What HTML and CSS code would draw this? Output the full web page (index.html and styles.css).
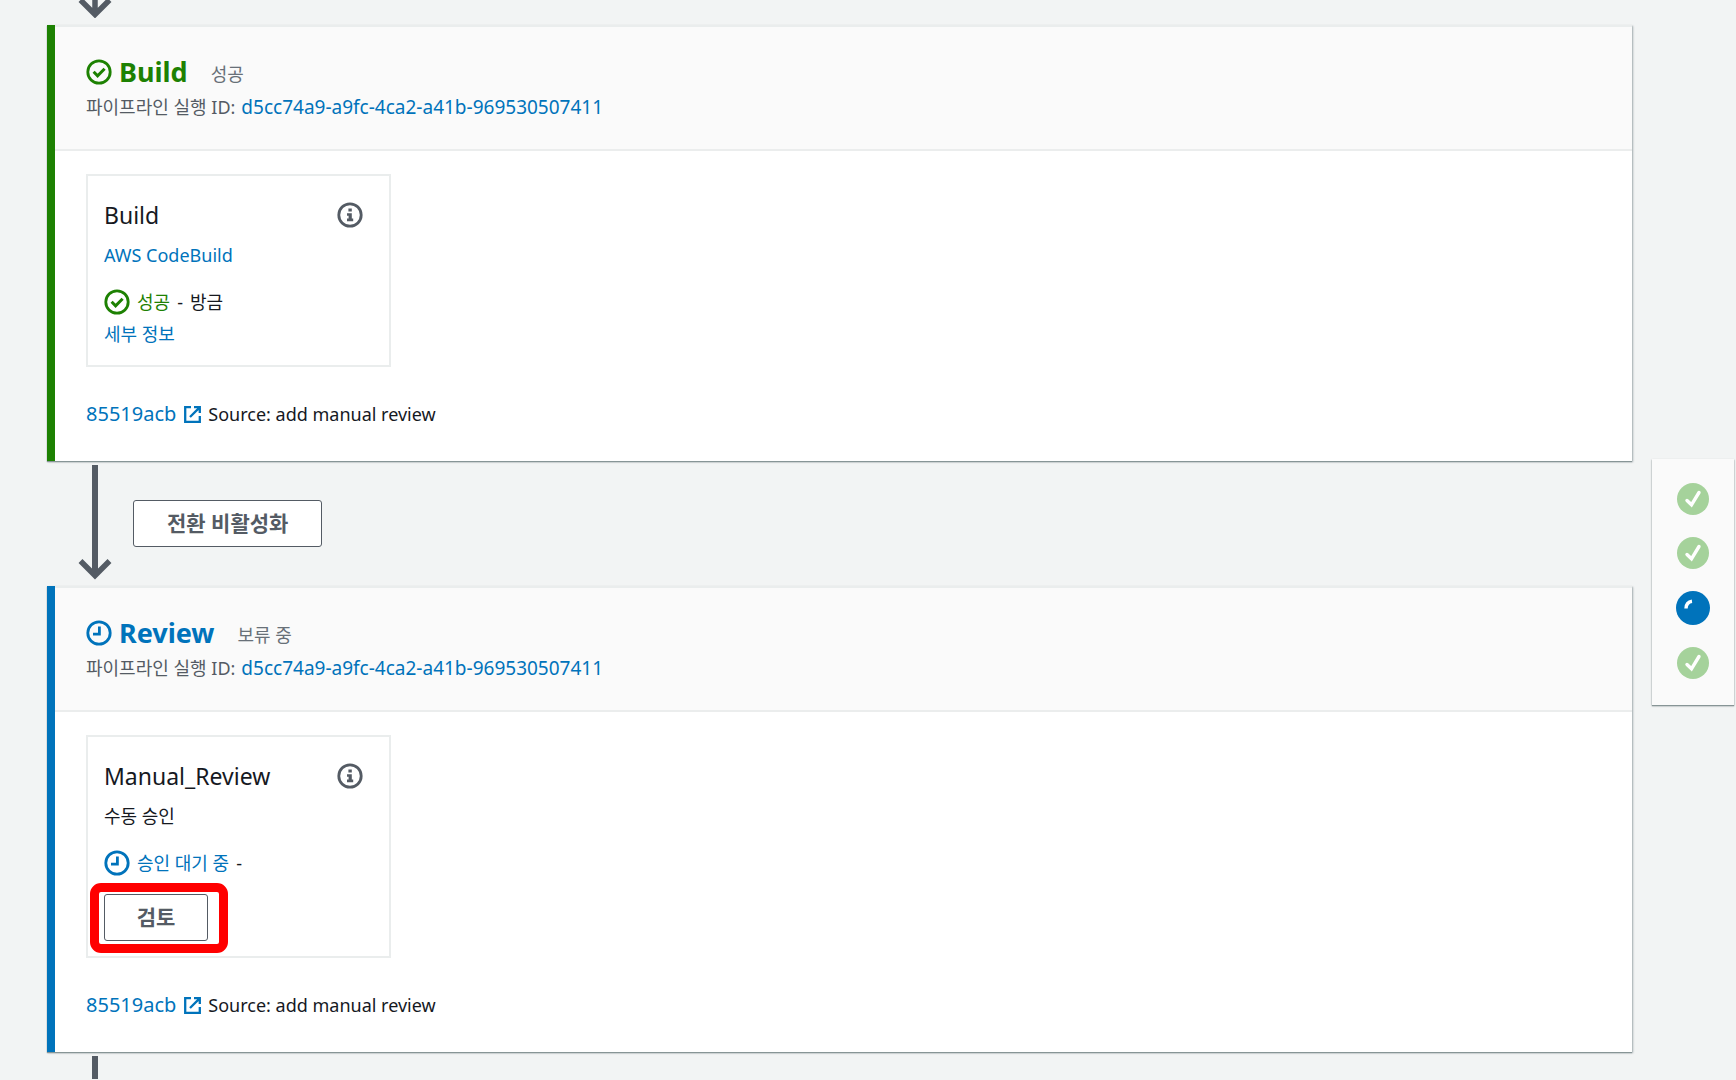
FILE: index.html
```html
<!DOCTYPE html>
<html lang="ko">
<head>
<meta charset="utf-8">
<title>파이프라인</title>
<link rel="stylesheet" href="styles.css">
</head>
<body>
<svg class="defs" aria-hidden="true">
  <symbol id="check" viewBox="0 0 26 26"><circle cx="13" cy="13" r="11.2" fill="none" stroke="currentColor" stroke-width="2.8"/><path d="M7.6 12.8l4 4 7-7" fill="none" stroke="currentColor" stroke-width="3"/></symbol>
  <symbol id="clock" viewBox="0 0 26 26"><circle cx="13" cy="13" r="11.2" fill="none" stroke="currentColor" stroke-width="2.8"/><path d="M13.4 6.5v7.7H7" fill="none" stroke="currentColor" stroke-width="2.8"/></symbol>
  <symbol id="info" viewBox="0 0 26 26"><circle cx="13" cy="13" r="11.2" fill="none" stroke="currentColor" stroke-width="2.8"/><path d="M11.4 6.6h3.4v3h-3.4zM10 11.2h4.8v5.4h1.4v2.6H10v-2.6h1.6v-2.8H10z" fill="currentColor"/></symbol>
  <symbol id="external" viewBox="0 0 17 17"><path d="M7 1.200H1.200v14.600h14.600V10M10 1.200h5.800V7M15.400 1.600L6 11" fill="none" stroke="currentColor" stroke-width="2.300"/></symbol>
  <symbol id="done" viewBox="0 0 32 32"><circle cx="16" cy="16" r="16" fill="#a5d29b"/><path d="M10 17.500l4.500 4.300L22 9.500" fill="none" stroke="#fff" stroke-width="3.400" stroke-linecap="round"/></symbol>
</svg>
<div class="page">
  <main class="pipeline">
    <div class="connector connector-in"><svg class="arrow-end" viewBox="0 0 34 18"><path d="M17 0v14M2.500 0L17 14.500 31.500 0" fill="none" stroke="currentColor" stroke-width="5.500"/></svg></div>

    <section class="stage succeeded">
      <header class="stage-header">
        <h2 class="stage-title"><svg class="icon"><use href="#check"/></svg><span class="stage-name">Build</span><span class="stage-status">성공</span></h2>
        <p class="execution"><span>파이프라인 실행 ID:</span><a class="execution-id" href="#">d5cc74a9-a9fc-4ca2-a41b-969530507411</a></p>
      </header>
      <div class="stage-body">
        <article class="action">
          <div class="action-head"><h3 class="action-name">Build</h3><button class="info" aria-label="정보"><svg class="icon"><use href="#info"/></svg></button></div>
          <p class="provider"><a href="#">AWS CodeBuild</a></p>
          <p class="action-status"><svg class="icon"><use href="#check"/></svg><span class="state">성공</span><span>-</span><span>방금</span></p>
          <p class="details"><a href="#">세부 정보</a></p>
        </article>
        <p class="commit"><a class="commit-id" href="#">85519acb<svg class="external"><use href="#external"/></svg></a><span>Source: add manual review</span></p>
      </div>
    </section>

    <div class="connector"><svg class="arrow" viewBox="0 0 34 116"><path d="M17 0v108" fill="none" stroke="currentColor" stroke-width="6"/><path d="M2.500 96L17 110.500 31.500 96" fill="none" stroke="currentColor" stroke-width="5.500"/></svg><button class="button">전환 비활성화</button></div>

    <section class="stage pending">
      <header class="stage-header">
        <h2 class="stage-title"><svg class="icon"><use href="#clock"/></svg><span class="stage-name">Review</span><span class="stage-status">보류 중</span></h2>
        <p class="execution"><span>파이프라인 실행 ID:</span><a class="execution-id" href="#">d5cc74a9-a9fc-4ca2-a41b-969530507411</a></p>
      </header>
      <div class="stage-body">
        <article class="action">
          <div class="action-head"><h3 class="action-name">Manual_Review</h3><button class="info" aria-label="정보"><svg class="icon"><use href="#info"/></svg></button></div>
          <p class="provider">수동 승인</p>
          <p class="action-status"><svg class="icon"><use href="#clock"/></svg><span class="state">승인 대기 중</span><span>-</span></p>
          <div class="review"><button class="button">검토</button><span class="highlight"></span></div>
        </article>
        <p class="commit"><a class="commit-id" href="#">85519acb<svg class="external"><use href="#external"/></svg></a><span>Source: add manual review</span></p>
      </div>
    </section>

    <div class="connector connector-out"><span class="shaft"></span></div>
  </main>

  <nav class="stage-nav" aria-label="단계">
    <svg class="dot"><use href="#done"/></svg>
    <svg class="dot"><use href="#done"/></svg>
    <svg class="dot current" viewBox="0 0 34 34"><circle cx="17" cy="17" r="17" fill="#0073bb"/><path d="M10 17.500Q10.300 11 16 10.300" fill="none" stroke="#fff" stroke-width="3.400"/></svg>
    <svg class="dot"><use href="#done"/></svg>
  </nav>
</div>
</body>
</html>
```

FILE: styles.css
```css
* { box-sizing: border-box; }

body {
  margin: 0;
  background: #f2f4f4;
  color: #16191f;
  font: 18px/28px "Noto Sans", "Noto Sans CJK KR", sans-serif;
}

h2, h3, p { margin: 0; font-weight: 400; }
a { color: #0073bb; text-decoration: none; }
svg { display: block; flex: none; }
.defs { position: absolute; width: 0; height: 0; }
.icon { width: 26px; height: 26px; }

.page {
  display: flex;
  align-items: flex-start;
  gap: 20px;
  padding: 0 2px 0 47px;
}
.pipeline { flex: 1; min-width: 0; }

/* Transitions between stages */
.connector {
  display: flex;
  gap: 21px;
  height: 125px;
  padding: 4px 0 0 31px;
  color: #545b64;
}
.connector .button { margin-top: 35px; }
.connector-in { height: 25px; padding-top: 0; }
.connector-out { height: 27px; padding-left: 45px; }
.arrow { width: 34px; height: 116px; }
.arrow-end { width: 34px; height: 18px; }
.shaft { width: 6px; background: #545b64; }

.button {
  height: 47px;
  padding: 0 33px 2px;
  border: 1px solid #545b64;
  border-radius: 3px;
  background: #fff;
  color: #545b64;
  font: 700 21px/28px "Noto Sans", "Noto Sans CJK KR", sans-serif;
}

/* Stages */
.stage {
  border-left: 8px solid #1d8102;
  background: #fff;
  box-shadow: 0 1px 1px #879596, 1px 1px 2px rgba(0, 28, 36, .3);
}
.succeeded { --state: #1d8102; }
.pending { --state: #0073bb; border-left-color: #0073bb; }

.stage-header {
  padding: 27px 31px 25px;
  border-top: 2px solid #eaeded;
  border-bottom: 2px solid #ebeded;
  background: #fafafa;
  color: #545b64;
}
.stage-title {
  display: flex;
  align-items: center;
  height: 36px;
  color: var(--state);
}
.stage-name { margin: 0 23px 0 7px; font-size: 27px; font-weight: 700; }
.stage-status { padding-top: 4px; color: #687078; font-size: 18px; }
.execution { display: flex; gap: 6px; line-height: 34px; }
.execution-id { font-size: 19px; }

.stage-body { padding: 23px 31px 33px; }

.action {
  width: 305px;
  padding: 23px 16px 15px;
  border: 2px solid #eaeded;
}
.action-head { display: flex; justify-content: space-between; align-items: center; }
.action-name { font-size: 23px; line-height: 32px; }
.info { margin-right: 10px; padding: 0; border: 0; background: none; color: #545b64; }
.provider { margin-top: 10px; }
.action-status { display: flex; align-items: center; gap: 7px; margin: 19px 0 4px; }
.action-status .icon, .state { color: var(--state); }
.details { padding-bottom: 2px; }

.review { position: relative; display: flex; width: 104px; margin-top: 17px; }
.review .button { width: 100%; padding: 0 0 2px; }
.highlight {
  position: absolute;
  inset: -11px -20px -12px -14px;
  border: 9px solid #f00;
  border-radius: 11px;
  pointer-events: none;
}

.commit { display: flex; gap: 7px; margin-top: 33px; }
.commit-id { display: flex; align-items: center; gap: 8px; font-size: 20px; }
.external { width: 17px; height: 17px; }

/* Stage overview */
.stage-nav {
  display: flex;
  flex-direction: column;
  align-items: center;
  gap: 22px;
  width: 82px;
  margin-top: 459px;
  padding: 24px 0 26px;
  background: #fafafa;
  box-shadow: 0 1px 1px #879596, 0 1px 2px rgba(0, 28, 36, .3);
}
.dot { width: 32px; height: 32px; }
.current { width: 34px; height: 34px; }
```
